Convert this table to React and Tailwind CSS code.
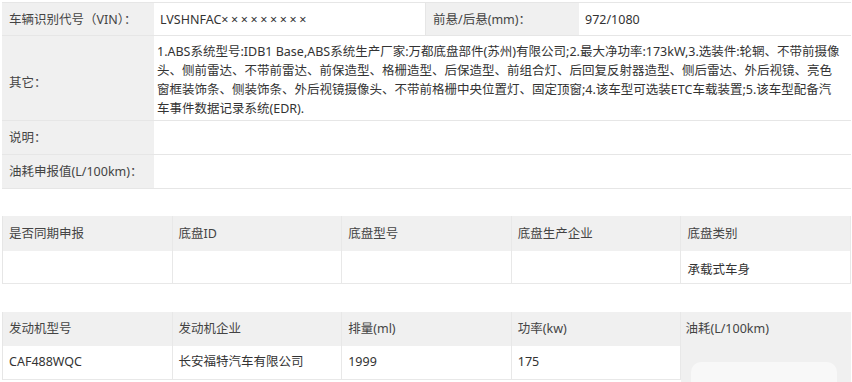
import React from "react";

const font = { fontFamily: '"Noto Sans", "Noto Sans CJK SC", sans-serif' };

function Label({ children, className = "" }) {
  return (
    <div className={"bg-[#f0f0f0] text-[#444] flex items-center pl-[7px] border-b border-[#e6e6e6] " + className}>
      {children}
    </div>
  );
}

function Value({ children, className = "" }) {
  return (
    <div className={"bg-white text-[#333] flex items-center pl-[6px] border-b border-[#e6e6e6] " + className}>
      {children}
    </div>
  );
}

export default function App() {
  return (
    <div className="w-[852px] h-[382px] bg-white overflow-hidden text-[12.5px] leading-[19px]" style={font}>
      {/* Table 1 */}
      <div className="ml-[2px] mt-[2px] w-[849px] grid grid-cols-[152px_272px_153px_272px] border-t border-r border-[#e6e6e6]">
        <Label className="h-[33px]">车辆识别代号（VIN）：</Label>
        <Value className="h-[33px] border-r">
          LVSHNFAC<span className="tracking-[2.6px]">×××××××××</span>
        </Value>
        <Label className="h-[33px]">前悬/后悬(mm)：</Label>
        <Value className="h-[33px]">972/1080</Value>

        <Label className="h-[85px] pt-[8px]">其它：</Label>
        <div className="col-span-3 h-[85px] bg-white text-[#333] pl-[3px] pt-[6px] border-b border-[#e6e6e6] whitespace-nowrap">
          <div>1.ABS系统型号:IDB1 Base,ABS系统生产厂家:万都底盘部件(苏州)有限公司;2.最大净功率:173kW,3.选装件:轮辋、不带前摄像</div>
          <div>头、侧前雷达、不带前雷达、前保造型、格栅造型、后保造型、前组合灯、后回复反射器造型、侧后雷达、外后视镜、亮色</div>
          <div>窗框装饰条、侧装饰条、外后视镜摄像头、不带前格栅中央位置灯、固定顶窗;4.该车型可选装ETC车载装置;5.该车型配备汽</div>
          <div>车事件数据记录系统(EDR).</div>
        </div>

        <Label className="h-[34px]">说明：</Label>
        <Value className="h-[34px] col-span-3"></Value>

        <Label className="h-[34px]">油耗申报值(L/100km)：</Label>
        <Value className="h-[34px] col-span-3"></Value>
      </div>

      {/* Table 2 */}
      <div className="ml-[2px] mt-[27px] w-[849px] grid grid-cols-5 border-l border-[#e6e6e6]">
        {["是否同期申报", "底盘ID", "底盘型号", "底盘生产企业", "底盘类别"].map((t) => (
          <div key={t} className="h-[35px] bg-[#f0f0f0] text-[#444] flex items-center pl-[6px] border-r border-[#e8e8e8]">
            {t}
          </div>
        ))}
        {["", "", "", "", "承载式车身"].map((t, i) => (
          <div key={i} className="h-[33px] bg-white text-[#333] flex items-center pl-[6px] pt-[4px] border-r border-b border-[#e8e8e8]">
            {t}
          </div>
        ))}
      </div>

      {/* Table 3 */}
      <div className="ml-[2px] mt-[28px] w-[849px] grid grid-cols-5 grid-rows-[34px_34px] border-l border-[#e6e6e6]">
        {["发动机型号", "发动机企业", "排量(ml)", "功率(kw)"].map((t) => (
          <div key={t} className="bg-[#f0f0f0] text-[#444] pl-[6px] pt-[7px] border-r border-[#e8e8e8]">
            {t}
          </div>
        ))}
        <div className="row-span-2 relative bg-[#f0f0f0] text-[#444] pl-[4px] pt-[7px] h-[72px]">
          油耗(L/100km)
          <div className="absolute left-[10px] right-[14px] top-[50px] bottom-0 rounded-t-[10px] bg-[#f8f8f8]"></div>
        </div>
        {["CAF488WQC", "长安福特汽车有限公司", "1999", "175"].map((t) => (
          <div key={t} className="bg-white text-[#333] pl-[6px] pt-[6px] border-r border-b border-[#e8e8e8]">
            {t}
          </div>
        ))}
      </div>
    </div>
  );
}
